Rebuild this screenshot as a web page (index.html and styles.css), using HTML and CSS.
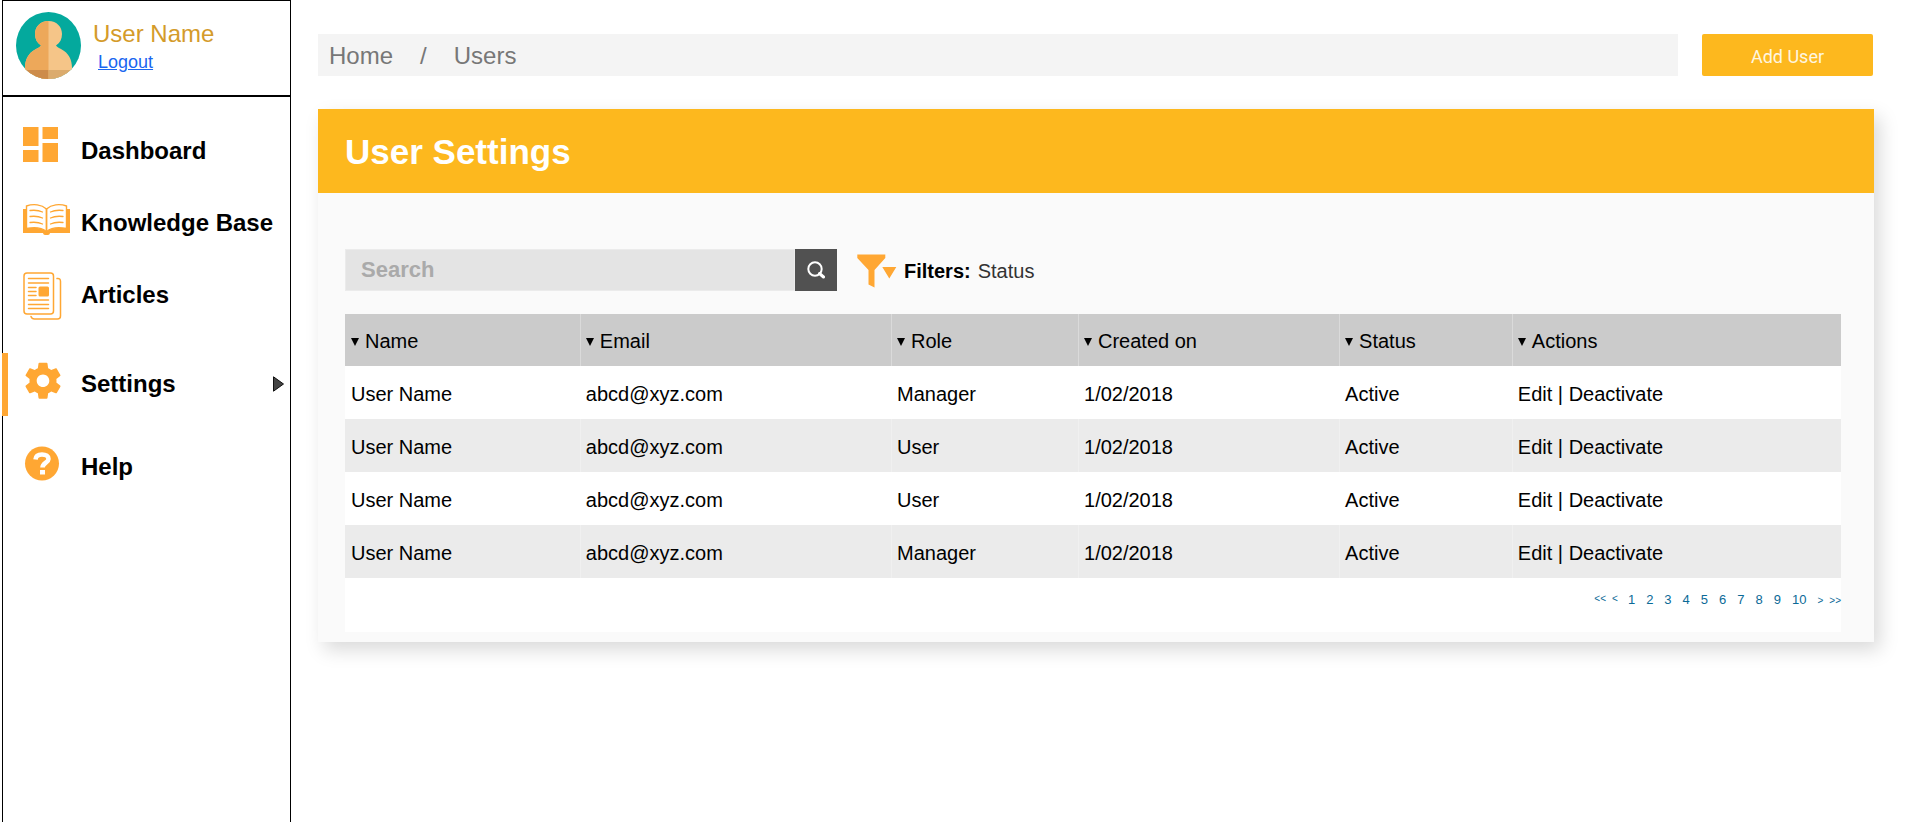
FILE: index.html
```html
<!DOCTYPE html>
<html lang="en">
<head>
<meta charset="utf-8">
<title>User Settings</title>
<link rel="stylesheet" href="styles.css">
</head>
<body>
<div class="layout">
  <aside class="sidebar">
    <div class="profile">
      <svg class="avatar" viewBox="0 0 65 67" aria-hidden="true">
        <defs>
          <clipPath id="disc"><ellipse cx="32.500" cy="33.500" rx="32.500" ry="33.500"/></clipPath>
          <clipPath id="left-half"><rect x="0" y="0" width="32.500" height="67"/></clipPath>
        </defs>
        <g clip-path="url(#disc)">
          <rect width="65" height="67" fill="#04a99d"/>
          <path fill="#f5c588" d="M32.500 9C24 9 19 15 19 22c0 5 2 9 6 11.500-1 1.500-3 2.500-5 3.500C12 41 9 48 9 56v11h47V56c0-8-3-15-11-19-2-1-4-2-5-3.500 4-2.500 6-6.500 6-11.500 0-7-5-13-13.500-13z"/>
          <path clip-path="url(#left-half)" fill="#eda85a" d="M32.500 9C24 9 19 15 19 22c0 5 2 9 6 11.500-1 1.500-3 2.500-5 3.500C12 41 9 48 9 56v11h47V9z"/>
          <path d="M9 58h23.500v9H9z" fill="#cd8c4b"/>
          <path d="M32.500 58H56v9H32.500z" fill="#dbab6d"/>
        </g>
      </svg>
      <div class="profile-text">
        <span class="profile-name">User Name</span>
        <a class="logout" href="#">Logout</a>
      </div>
    </div>
    <nav class="menu">
      <a class="menu-item" href="#">
        <svg class="menu-icon" viewBox="0 0 48 50" aria-hidden="true"><path fill="#ffa733" d="M0 1h15.500v19H0zM19.500 1H35v12H19.500zM0 24h15.500v12H0zM19.500 17H35v19H19.500z"/></svg>
        Dashboard
      </a>
      <a class="menu-item" href="#">
        <svg class="menu-icon" viewBox="0 0 48 50" aria-hidden="true">
          <path fill="#ffa733" d="M0 11h3v19h41V11h3v24H27c-.5 2-1.500 2-3.500 2s-3 0-3.500-2H0z"/>
          <path fill="#fff" stroke="#ffa733" stroke-width="1.400" d="M3.500 30.500V8c7-2.500 15-1.500 20 3 5-4.500 13-5.500 20-3v22.500c-7-1.500-15-1-20 3-5-4-13-4.500-20-3z"/>
          <path stroke="#ffa733" stroke-width="1.800" d="M23.500 11v23"/>
          <path fill="none" stroke="#ffa733" stroke-width="1.300" stroke-linecap="round" d="M7 12.500c4.500-.5 9-.2 12.500 1.500M7 18.500c4.500-.5 9-.2 12.500 1.500M7 24.500c4.500-.5 9-.2 12.500 1.500M40 12.500c-4.500-.5-9-.2-12.500 1.500M40 18.500c-4.500-.5-9-.2-12.500 1.500M40 24.500c-4.500-.5-9-.2-12.500 1.500"/>
        </svg>
        Knowledge Base
      </a>
      <a class="menu-item" href="#">
        <svg class="menu-icon" viewBox="0 0 48 50" aria-hidden="true">
          <g fill="none" stroke="#ffa733" stroke-width="1.500" stroke-linecap="round">
            <rect x="1" y="3" width="29.500" height="41" rx="3"/>
            <path d="M34 8.500c2.500-.5 3.500 1 3.500 3V46c0 2-1 3-3 3H11.500c-2 0-3-1-3.500-2.500"/>
            <path d="M5.500 8.500H25.500M5.500 13H25.500M5.500 17.500H13M5.500 21.500H13M5.500 25.500H13M5.500 30H25.500M5.500 34.500H25.500M5.500 38.500H25.500"/>
          </g>
          <rect x="15.500" y="16.500" width="10.500" height="10" rx="1.500" fill="#ffa733"/>
        </svg>
        Articles
      </a>
      <a class="menu-item menu-item-active" href="#" aria-current="page">
        <svg class="menu-icon" viewBox="0 0 48 50" aria-hidden="true"><path transform="translate(-1.600 .200) scale(1.800)" fill="#ffa733" d="M19.430 12.980c.04-.32.07-.64.07-.98s-.03-.66-.07-.98l2.110-1.650c.19-.15.24-.42.12-.64l-2-3.460c-.12-.22-.39-.3-.61-.22l-2.490 1c-.52-.4-1.080-.73-1.690-.98l-.38-2.650C14.460 2.180 14.250 2 14 2h-4c-.25 0-.46.18-.49.42l-.38 2.650c-.61.25-1.170.59-1.690.98l-2.490-1c-.23-.09-.49 0-.61.22l-2 3.460c-.13.22-.07.49.12.64l2.110 1.650c-.04.32-.07.65-.07.98s.03.66.07.98l-2.110 1.650c-.19.15-.24.42-.12.64l2 3.460c.12.22.39.3.61.22l2.490-1c.52.4 1.080.73 1.690.98l.38 2.650c.03.24.24.42.49.42h4c.25 0 .46-.18.49-.42l.38-2.650c.61-.25 1.170-.59 1.690-.98l2.490 1c.23.09.49 0 .61-.22l2-3.460c.12-.22.07-.49-.12-.64l-2.110-1.650zM12 15.500c-1.930 0-3.500-1.570-3.500-3.500s1.570-3.500 3.500-3.500 3.500 1.570 3.500 3.500-1.570 3.500-3.500 3.500z"/></svg>
        Settings
        <svg class="menu-arrow" viewBox="0 0 11 16" aria-hidden="true"><path d="M.5.800 10.500 8 .5 15.200z" fill="#444" stroke="#111"/></svg>
      </a>
      <a class="menu-item" href="#">
        <svg class="menu-icon" viewBox="0 0 48 50" aria-hidden="true">
          <circle cx="19" cy="21.500" r="17" fill="#ffa733"/>
          <path d="M12.500 17.500c.3-3.700 3-5 6.500-5 4 0 6.500 1.800 6.500 4.500 0 3.500-6 3.800-6 8.500" fill="none" stroke="#fff" stroke-width="4.600"/>
          <path d="M17 28h5v4.500h-5z" fill="#fff"/>
        </svg>
        Help
      </a>
    </nav>
  </aside>

  <main class="main">
    <div class="topbar">
      <nav class="breadcrumb" aria-label="Breadcrumb">
        <a href="#">Home</a>
        <span>/</span>
        <a href="#">Users</a>
      </nav>
      <button class="add-user" type="button">Add User</button>
    </div>

    <section class="panel">
      <h1 class="panel-title">User Settings</h1>
      <div class="panel-body">
        <div class="toolbar">
          <form class="search">
            <input class="search-input" type="search" placeholder="Search" aria-label="Search">
            <button class="search-button" type="button" aria-label="Search">
              <svg viewBox="0 0 18 18" aria-hidden="true"><circle cx="8" cy="8" r="6.700" fill="none" stroke="#fff" stroke-width="2"/><path d="m12.500 12.500 4 3.500" stroke="#fff" stroke-width="3" stroke-linecap="round"/></svg>
            </button>
          </form>
          <div class="filters">
            <svg class="filter-icon" viewBox="0 0 40 34" aria-hidden="true"><path fill="#ffa733" d="M.3.500h28v3.500L17.500 16v17.500l-6-3V16L.3 4zM25.300 13h14L32.300 24.500z"/></svg>
            <span class="filters-label">Filters:</span>
            <button class="filter-option" type="button">Status</button>
          </div>
        </div>

        <table class="users">
          <colgroup>
            <col class="col-name"><col class="col-email"><col class="col-role"><col class="col-created"><col class="col-status"><col class="col-actions">
          </colgroup>
          <thead>
            <tr>
              <th scope="col"><button class="sort" type="button"><svg viewBox="0 0 8 8" aria-hidden="true"><path d="M0 0h8L4 8z"/></svg>Name</button></th>
              <th scope="col"><button class="sort" type="button"><svg viewBox="0 0 8 8" aria-hidden="true"><path d="M0 0h8L4 8z"/></svg>Email</button></th>
              <th scope="col"><button class="sort" type="button"><svg viewBox="0 0 8 8" aria-hidden="true"><path d="M0 0h8L4 8z"/></svg>Role</button></th>
              <th scope="col"><button class="sort" type="button"><svg viewBox="0 0 8 8" aria-hidden="true"><path d="M0 0h8L4 8z"/></svg>Created on</button></th>
              <th scope="col"><button class="sort" type="button"><svg viewBox="0 0 8 8" aria-hidden="true"><path d="M0 0h8L4 8z"/></svg>Status</button></th>
              <th scope="col"><button class="sort" type="button"><svg viewBox="0 0 8 8" aria-hidden="true"><path d="M0 0h8L4 8z"/></svg>Actions</button></th>
            </tr>
          </thead>
          <tbody>
            <tr><td>User Name</td><td>abcd@xyz.com</td><td>Manager</td><td>1/02/2018</td><td>Active</td><td><a href="#">Edit</a> | <a href="#">Deactivate</a></td></tr>
            <tr><td>User Name</td><td>abcd@xyz.com</td><td>User</td><td>1/02/2018</td><td>Active</td><td><a href="#">Edit</a> | <a href="#">Deactivate</a></td></tr>
            <tr><td>User Name</td><td>abcd@xyz.com</td><td>User</td><td>1/02/2018</td><td>Active</td><td><a href="#">Edit</a> | <a href="#">Deactivate</a></td></tr>
            <tr><td>User Name</td><td>abcd@xyz.com</td><td>Manager</td><td>1/02/2018</td><td>Active</td><td><a href="#">Edit</a> | <a href="#">Deactivate</a></td></tr>
          </tbody>
        </table>

        <nav class="pagination" aria-label="Pages">
          <div class="page-step page-back"><a href="#">&lt;&lt;</a><a href="#">&lt;</a></div>
          <div class="page-numbers">
            <a href="#">1</a><a href="#">2</a><a href="#">3</a><a href="#">4</a><a href="#">5</a><a href="#">6</a><a href="#">7</a><a href="#">8</a><a href="#">9</a><a href="#">10</a>
          </div>
          <div class="page-step page-forward"><a href="#">&gt;</a><a href="#">&gt;&gt;</a></div>
        </nav>
      </div>
    </section>
  </main>
</div>
</body>
</html>
```

FILE: styles.css
```css
* {
  box-sizing: border-box;
}

body {
  margin: 0;
  background: #fff;
  color: #000;
  font-family: "Liberation Sans", Arial, sans-serif;
  font-size: 20px;
}

a {
  color: inherit;
  text-decoration: none;
}

button {
  border: 0;
  padding: 0;
  background: none;
  color: inherit;
  font: inherit;
  cursor: pointer;
}

svg {
  display: block;
  flex: none;
}

.layout {
  display: flex;
  min-height: 100vh;
  padding-left: 2px;
}

/* Sidebar */
.sidebar {
  flex: none;
  width: 289px;
  border: 1px solid #000;
  border-bottom: 0;
}

.profile {
  display: flex;
  gap: 12px;
  height: 96px;
  padding: 11px 13px 0;
  border-bottom: 2px solid #000;
}

.avatar {
  width: 65px;
  height: 67px;
}

.profile-text {
  display: flex;
  flex-direction: column;
  align-items: flex-start;
  padding-top: 8px;
}

.profile-name {
  color: #d49b2a;
  font-size: 24px;
  line-height: 28px;
}

.logout {
  margin-left: 5px;
  color: #1a66f0;
  font-size: 18px;
  line-height: 28px;
  text-decoration: underline;
}

.menu {
  display: flex;
  flex-direction: column;
  padding-top: 18px;
}

.menu-item {
  display: flex;
  align-items: center;
  gap: 10px;
  height: 72px;
  padding: 0 6px 0 20px;
  font-size: 24px;
  font-weight: bold;
}

.menu-icon {
  width: 48px;
  height: 50px;
}

.menu-item-active {
  height: 63px;
  margin: 22px 0 15px -1px;
  padding-bottom: 2px;
  padding-left: 15px;
  border-left: 6px solid #ffa733;
}

.menu-arrow {
  width: 11px;
  height: 16px;
  margin-left: auto;
}

/* Main column */
.main {
  flex: 1;
  min-width: 0;
  padding: 34px 46px 40px 27px;
}

.topbar {
  display: flex;
  gap: 24px;
  padding-right: 1px;
}

.breadcrumb {
  display: flex;
  flex: 1;
  align-items: center;
  gap: 27px;
  height: 42px;
  padding: 2px 11px 0;
  background: #f4f4f4;
  color: #777;
  font-size: 24px;
}

.add-user {
  width: 171px;
  height: 42px;
  padding-top: 2px;
  border-radius: 2px;
  background: #fdb81e;
  color: #fff6e0;
  font-family: Roboto, sans-serif;
  font-size: 18px;
}

.panel {
  margin-top: 33px;
  background: #fafafa;
  box-shadow: 6px 8px 18px rgba(0, 0, 0, 0.15);
}

.panel-title {
  margin: 0;
  padding: 23px 27px 21px;
  background: #fdb81e;
  color: #fff;
  font-size: 35px;
  line-height: 40px;
}

.panel-body {
  padding: 56px 33px 10px 27px;
}

.toolbar {
  display: flex;
  align-items: center;
  gap: 20px;
}

.search {
  display: flex;
  width: 492px;
  height: 42px;
}

.search-input {
  flex: 1;
  min-width: 0;
  padding: 0 15px;
  border: 1px solid #ebebeb;
  border-radius: 0;
  background: #e4e4e4;
  font: bold 22px "Liberation Sans", Arial, sans-serif;
  appearance: none;
}

.search-input::placeholder {
  color: #aaa;
}

.search-button {
  display: flex;
  align-items: center;
  justify-content: center;
  width: 42px;
  background: #515151;
}

.search-button svg {
  width: 18px;
  height: 18px;
}

.filters {
  display: flex;
  align-items: center;
  gap: 7px;
  padding-top: 2px;
}

.filter-icon {
  width: 40px;
  height: 34px;
}

.filters-label {
  font-weight: bold;
}

.filter-option {
  color: #333;
}

/* Users table */
.users {
  width: 100%;
  margin-top: 23px;
  border-collapse: collapse;
  table-layout: fixed;
  background: #fff;
}

.col-name { width: 15.7%; }
.col-email { width: 20.8%; }
.col-role { width: 12.5%; }
.col-created { width: 17.45%; }
.col-status { width: 11.55%; }
.col-actions { width: 22%; }

.users th,
.users td {
  height: 53px;
  padding: 3px 6px 0;
  font-weight: normal;
  text-align: left;
}

.users th {
  height: 52px;
  background: #cbcbcb;
}

.users th + th {
  box-shadow: inset 1px 0 #dadada;
}

.users tbody tr:nth-child(even) {
  background: #ebebeb;
}

.users tbody tr:nth-child(even) td + td {
  box-shadow: inset 1px 0 #f0f0f0;
}

.sort {
  display: flex;
  align-items: center;
  gap: 6px;
}

.sort svg {
  width: 8px;
  height: 8px;
}

/* Pagination */
.pagination {
  display: flex;
  justify-content: flex-end;
  height: 54px;
  padding-top: 14px;
  background: #fff;
  color: #0b6a97;
  font-size: 13px;
  line-height: 16px;
}

.page-numbers {
  display: flex;
  gap: 11px;
}

.page-step {
  display: flex;
  gap: 6px;
  font-size: 10px;
}

.page-back {
  margin-right: 10px;
  line-height: 14px;
}

.page-forward {
  margin-left: 11px;
  line-height: 18px;
}
```
